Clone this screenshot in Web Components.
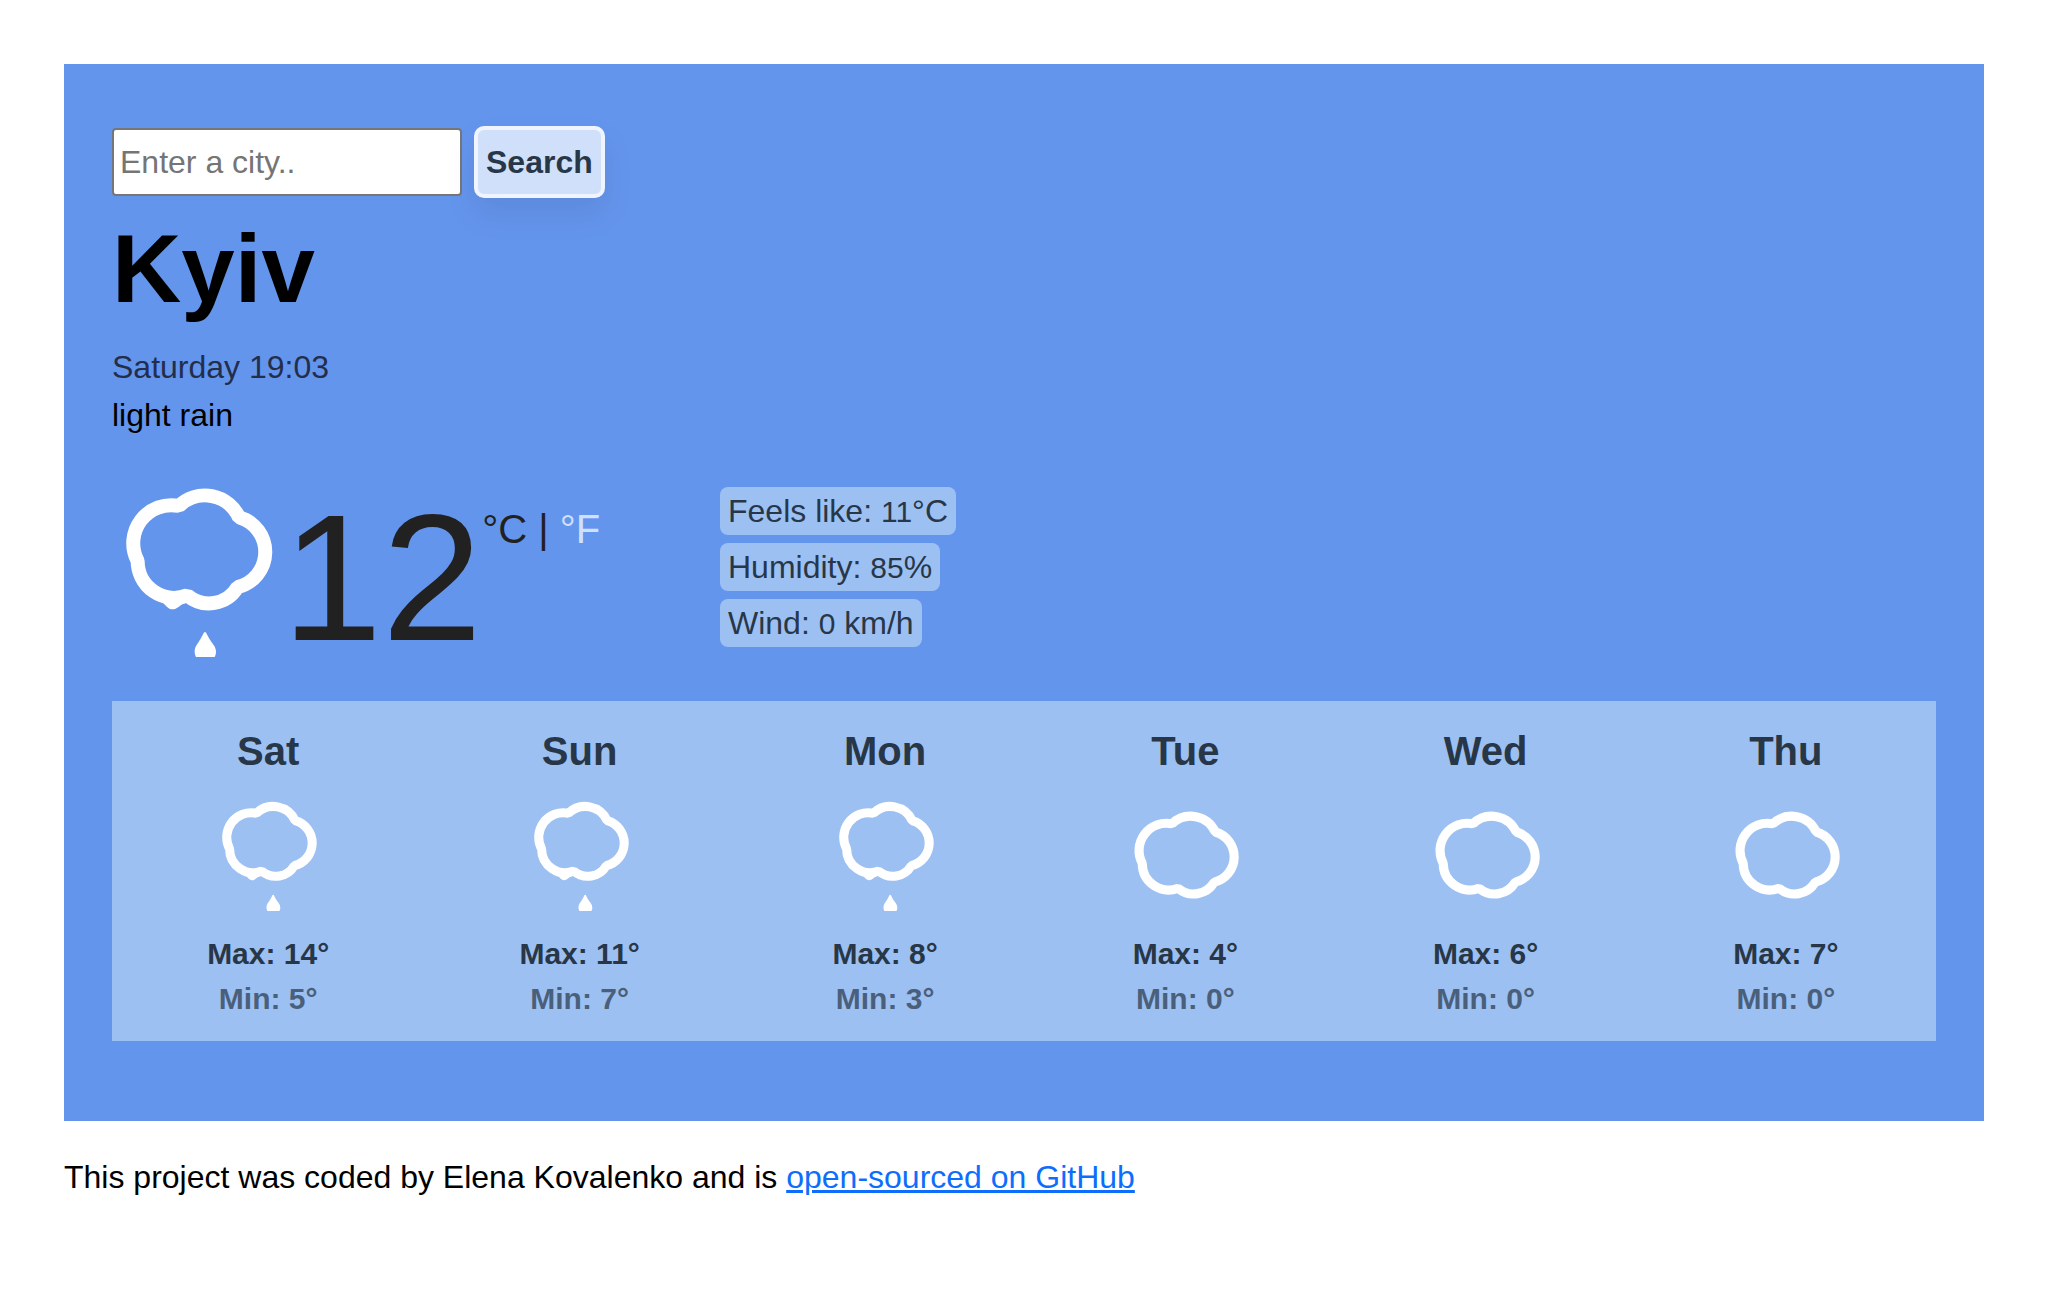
<!DOCTYPE html>
<html lang="en">
<head>
<meta charset="utf-8">
<meta name="viewport" content="width=device-width, initial-scale=1">
<title>Weather</title>
<style>
  body {
    margin: 0;
    padding: 64px;
    background: #fff;
    color: #000;
    font: 32px/48px "Liberation Sans", Helvetica, Arial, sans-serif;
    --ink: #283747;
    --sky: #6495ed;
    --panel: #9dc0f3;
  }
</style>
</head>
<body>
<weather-app>
  <city-search></city-search>
  <city-overview city="Kyiv" time="Saturday 19:03" description="light rain"></city-overview>
  <current-weather temperature="12" icon="rain">
    <weather-fact label="Feels like:" value="11" unit="°C"></weather-fact>
    <weather-fact label="Humidity:" value="85" unit="%"></weather-fact>
    <weather-fact label="Wind:" value="0" unit=" km/h"></weather-fact>
  </current-weather>
  <weather-forecast>
    <forecast-day day="Sat" icon="rain" max="14" min="5"></forecast-day>
    <forecast-day day="Sun" icon="rain" max="11" min="7"></forecast-day>
    <forecast-day day="Mon" icon="rain" max="8" min="3"></forecast-day>
    <forecast-day day="Tue" icon="cloud" max="4" min="0"></forecast-day>
    <forecast-day day="Wed" icon="cloud" max="6" min="0"></forecast-day>
    <forecast-day day="Thu" icon="cloud" max="7" min="0"></forecast-day>
  </weather-forecast>
</weather-app>
<page-footer>This project was coded by Elena Kovalenko and is</page-footer>

<script>
class Base extends HTMLElement {
  connectedCallback() {
    if (!this.shadowRoot) this.attachShadow({ mode: "open" }).innerHTML = this.render();
  }
  attr(name) { return this.getAttribute(name) || ""; }
}

customElements.define("weather-app", class extends Base {
  render() {
    return `<style>
      :host { display: block; }
      main { display: flex; flex-direction: column; background: var(--sky); padding: 62px 48px 80px; }
    </style><main><slot></slot></main>`;
  }
});

customElements.define("city-search", class extends Base {
  render() {
    return `<style>
      :host { display: block; }
      form { display: flex; align-items: center; gap: 12px; }
      input, button { font: inherit; box-sizing: border-box; margin: 0; }
      input { width: 350px; height: 68px; padding: 0 6px; background: #fff; border: 2px solid #767676; border-radius: 4px; }
      input::placeholder { color: #757575; opacity: 1; }
      button { font-weight: bold; color: var(--ink); padding: 8px; border: 4px solid #f0f4fe;
        border-radius: 10px; background: #d0dffa; box-shadow: 0 16px 32px rgba(0, 0, 0, .08); }
    </style>
    <form onsubmit="return false">
      <input type="search" placeholder="Enter a city.." aria-label="City">
      <button type="submit">Search</button>
    </form>`;
  }
});

customElements.define("city-overview", class extends Base {
  render() {
    return `<style>
      :host { display: block; margin-top: 13px; }
      h1 { margin: 0 0 16px; font-size: 96px; line-height: 116px; }
      p { margin: 0; }
      .time { color: #222e4b; }
    </style>
    <h1>${this.attr("city")}</h1>
    <p class="time">${this.attr("time")}</p>
    <p>${this.attr("description")}</p>`;
  }
});

const CLOUD = "M207 93A112 112 0 0 1 387 127A108 108 0 0 1 383 336A100 100 0 0 1 232 361A110 110 0 0 1 83 258A114 114 0 0 1 207 93Z";

customElements.define("weather-icon", class extends Base {
  render() {
    const rain = this.attr("kind") === "rain";
    return `<style>
      :host { display: block; }
      svg { display: block; width: 100%; height: 100%; }
    </style>
    <svg viewBox="${rain ? "6 36 510 510" : "32 -2 458 458"}" role="img" aria-label="${this.attr("kind")}">
      <path d="${CLOUD}" fill="none" stroke="#fff" stroke-width="${rain ? 42 : 38}" stroke-linejoin="bevel"/>
      ${rain ? `<path fill="#fff" d="M155 380C170 392 174 403 187 403C203 403 205 392 226 384Z"/>
      <path fill="#fff" d="M285 471C281 471 279 480 272 491C263 506 254 514 254 530C254 537 256 542 258 546H314C316 542 318 537 318 530C318 514 307 506 298 491C291 480 289 471 285 471Z"/>` : ""}
    </svg>`;
  }
});

customElements.define("current-weather", class extends Base {
  render() {
    return `<style>
      :host { display: grid; grid-template-columns: 1fr 2fr; margin: 48px 0 32px; }
      .now { display: flex; align-items: flex-start; color: #212121; }
      weather-icon { width: 170px; height: 170px; }
      .degrees { font-size: 180px; line-height: 182px; }
      .units { font-size: 40px; line-height: 60px; padding-top: 12px; }
      a { color: #d0dffa; text-decoration: none; }
      a.active { color: inherit; }
      .facts { display: flex; flex-direction: column; align-items: flex-start; gap: 8px; }
    </style>
    <div class="now">
      <weather-icon kind="${this.attr("icon")}"></weather-icon>
      <span class="degrees">${this.attr("temperature")}</span>
      <span class="units"><a class="active" href="#c">°C</a> | <a href="#f">°F</a></span>
    </div>
    <div class="facts"><slot></slot></div>`;
  }
});

customElements.define("weather-fact", class extends Base {
  render() {
    return `<style>
      :host { display: block; padding: 0 8px; border-radius: 8px; background: var(--panel); color: var(--ink); }
      .value { font-size: 30px; line-height: 32px; }
    </style>${this.attr("label")} <span class="value">${this.attr("value")}</span>${this.attr("unit")}`;
  }
});

customElements.define("weather-forecast", class extends Base {
  render() {
    return `<style>
      :host { display: flex; padding: 20px 0; background: var(--panel); }
    </style><slot></slot>`;
  }
});

customElements.define("forecast-day", class extends Base {
  render() {
    return `<style>
      :host { display: flex; flex: 1 1 auto; flex-direction: column; align-items: center;
        color: var(--ink); font-size: 30px; line-height: 45px; font-weight: bold; }
      h2 { margin: 0; font-size: 40px; line-height: 60px; }
      weather-icon { width: 110px; height: 110px; margin: 20px 0; }
      .min { opacity: .7; }
    </style>
    <h2>${this.attr("day")}</h2>
    <weather-icon kind="${this.attr("icon")}"></weather-icon>
    <div>Max: ${this.attr("max")}°</div>
    <div class="min">Min: ${this.attr("min")}°</div>`;
  }
});

customElements.define("page-footer", class extends Base {
  render() {
    return `<style>
      :host { display: block; margin-top: 32px; }
      a { color: #0d6efd; text-decoration: underline; }
    </style><footer><slot></slot> <a href="#github">open-sourced on GitHub</a></footer>`;
  }
});
</script>
</body>
</html>
